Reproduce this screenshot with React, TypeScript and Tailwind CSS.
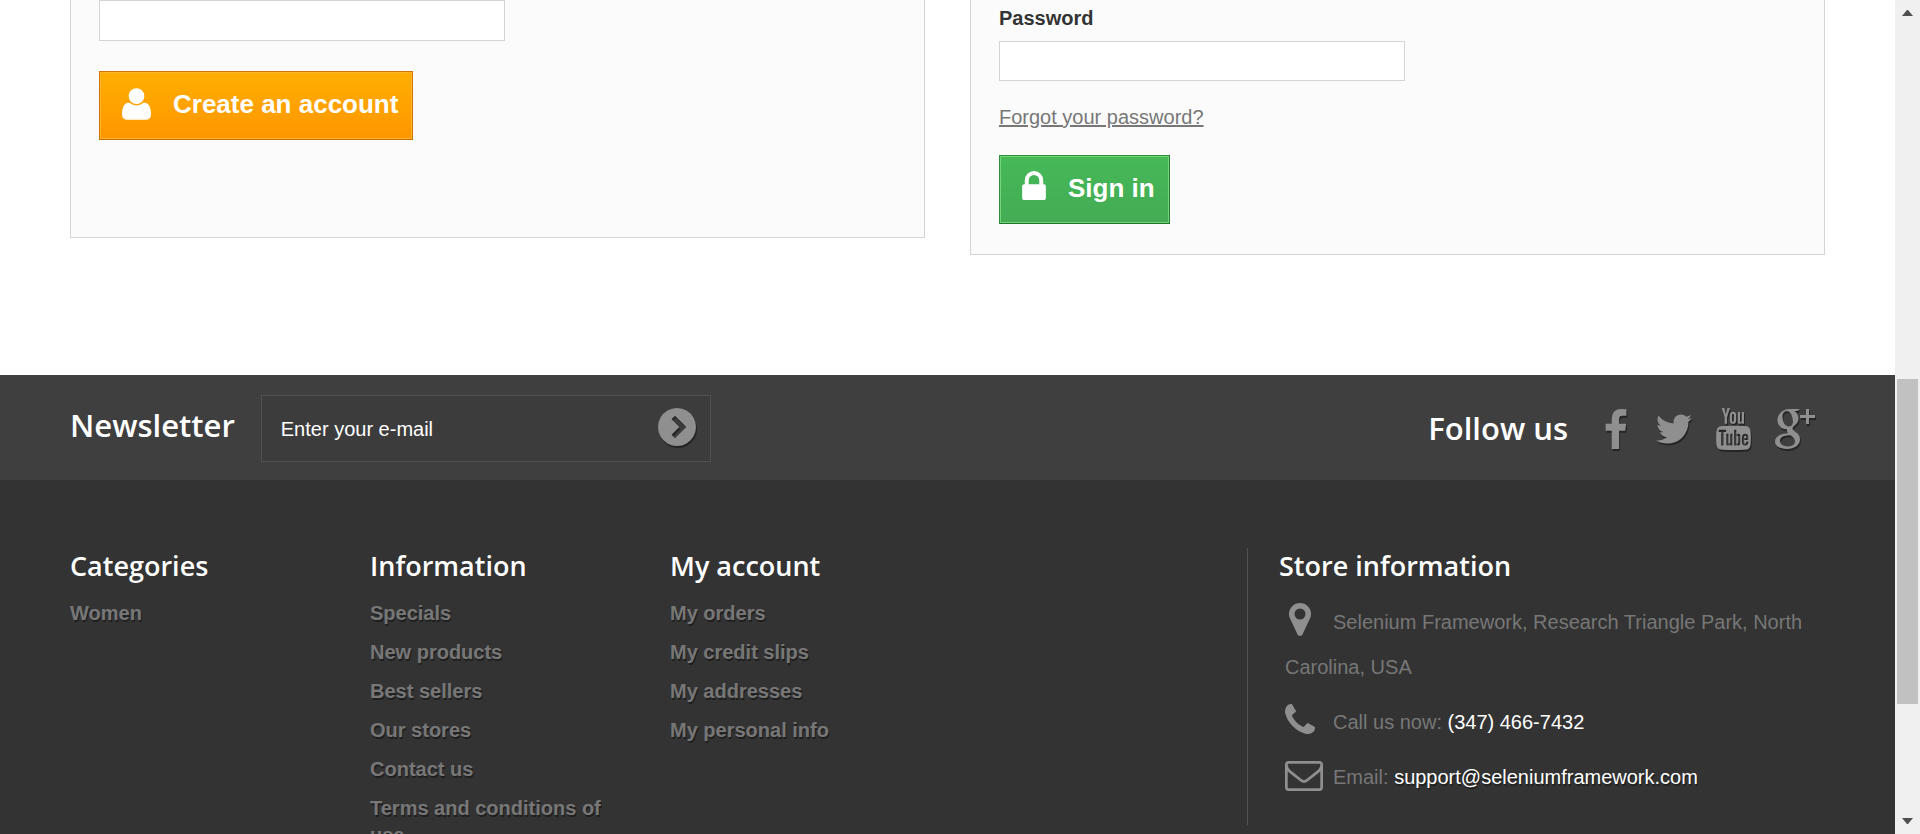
import type { ReactNode } from "react";

const icons = {
  user: {
    box: "0 128 1408 1536",
    d: "M1408 1405q0 120-73 189.5t-194 69.5h-874q-121 0-194-69.5t-73-189.5q0-53 3.5-103.5t14-109 26.5-108.5 43-97.5 62-81 85.5-53.5 111.5-20q9 0 42 21.5t74.5 48 108 48 133.5 21.5 133.5-21.5 108-48 74.5-48 42-21.5q61 0 111.5 20t85.5 53.5 62 81 43 97.5 26.5 108.5 14 109 3.5 103.5zm-320-893q0 159-112.5 271.5t-271.5 112.5-271.5-112.5-112.5-271.5 112.5-271.5 271.5-112.5 271.5 112.5 112.5 271.5z",
  },
  lock: {
    box: "0 128 1152 1408",
    d: "M320 768h512v-192q0-106-75-181t-181-75-181 75-75 181v192zm832 96v576q0 40-28 68t-68 28h-960q-40 0-68-28t-28-68v-576q0-40 28-68t68-28h32v-192q0-184 132-316t316-132 316 132 132 316v192h32q40 0 68 28t28 68z",
  },
  chevron: {
    box: "0 128 1536 1536",
    d: "M708 1332l414-414q22-22 0-44l-414-414q-22-22-44 0l-98 98q-22 22 0 44l294 294-294 294q-22 22 0 44l98 98q22 22 44 0zM1536 896q0 209-103 385.5t-279.5 279.5-385.5 103-385.5-103-279.5-279.5-103-385.5 103-385.5 279.5-279.5 385.5-103 385.5 103 279.5 279.5 103 385.5z",
  },
  facebook: {
    box: "95 0 864 1664",
    d: "M959 12v264h-157q-86 0-116 36t-30 108v189h293l-39 296h-254v759h-306v-759h-255v-296h255v-218q0-186 104-288.5t277-102.5q147 0 228 12z",
  },
  twitter: {
    box: "44 256 1576 1280",
    d: "M1620 408q-67 98-162 167 1 14 1 42 0 130-38 259.5t-115.5 248.5-184.5 210.5-258 146-323 54.5q-271 0-496-145 35 4 78 4 225 0 401-138-105-2-188-64.5t-114-159.5q33 5 61 5 43 0 85-11-112-23-185.5-111.5t-73.5-205.5v-4q68 38 146 41-66-44-105-115t-39-154q0-88 44-163 121 149 294.5 238.5t371.5 99.5q-8-38-8-74 0-134 94.5-228.5t228.5-94.5q140 0 236 102 109-21 205-78-37 115-142 178 93-10 186-50z",
  },
  youtube: {
    box: "27 0 1482 1792",
    d: "M971 1244v211q0 67-39 67-23 0-45-22v-301q22-22 45-22 39 0 39 67zm338 1v46h-90v-46q0-68 45-68t45 68zm-966-218h107v-94h-312v94h105v569h100v-569zm288 569h89v-494h-89v378q-30 42-57 42-18 0-21-21-1-3-1-35v-364h-89v391q0 49 8 73 12 37 58 37 48 0 102-61v54zm429-148v-197q0-73-9-99-17-56-71-56-50 0-93 54v-217h-89v663h89v-48q45 55 93 55 54 0 71-55 9-27 9-100zm338-10v-13h-91q0 51-2 61-7 36-40 36-46 0-46-69v-87h179v-103q0-79-27-116-39-51-106-51-68 0-107 51-28 37-28 116v173q0 79 29 116 39 51 108 51 72 0 108-53 18-27 21-54 2-9 2-58zm-608-913v-210q0-69-43-69t-43 69v210q0 70 43 70t43-70zm719 751q0 234-26 350-14 59-58 99t-102 46q-184 21-555 21t-555-21q-58-6-102.5-46t-57.5-99q-26-112-26-350 0-234 26-350 14-59 58-99t103-47q183-20 554-20t555 20q58 7 102.5 47t57.5 99q26 112 26 350zm-998-1276h102l-121 399v271h-100v-271q-14-74-61-212-37-103-65-187h106l71 263zm370 333v175q0 81-28 118-38 51-106 51-67 0-105-51-28-38-28-118v-175q0-80 28-117 38-51 105-51 68 0 106 51 28 37 28 117zm335-162v499h-91v-55q-53 62-103 62-46 0-59-37-8-24-8-75v-394h91v367q0 33 1 35 3 22 21 22 27 0 57-43v-381h91z",
  },
  google: {
    box: "0 0 40 40",
    d: "M14 0H25L22 2H19.500C22 4 23.500 6.500 23.500 9.500C23.500 13 21.500 15 19.500 16.600C18 18 17.500 18.600 17.500 19.500C17.500 20.500 18.500 21.300 20 22.500C23.300 24.800 25 27 25 30.500C25 35.500 20 40 11.500 40C4.500 40 0 37 0 32.500C0 28 4.500 24.600 13.200 24.300C12.300 23.300 11.800 22.300 12 20.200C6.500 20.500 2.500 16.500 2.500 11C2.500 5 8 0 14 0ZM11.800 2C9 2 7.200 4.500 7.500 8.500C7.900 13.500 10.500 17.500 13.800 17.500C16.700 17.500 18.200 15.300 17.900 11.500C17.400 6.300 15 2 11.800 2ZM14.500 26.300C8.500 26.300 5 28.500 5 31.800C5 35.200 8.300 37.500 13 37.500C17.600 37.500 20 35.300 20 32.300C20 29.700 18.300 28.200 15.800 26.400C15.400 26.300 15 26.300 14.500 26.300ZM31 0H34V6H40V9H34V15H31V9H25V6H31Z",
  },
  marker: {
    box: "0 128 1024 1536",
    d: "M768 640q0-106-75-181t-181-75-181 75-75 181 75 181 181 75 181-75 75-181zm256 0q0 109-33 179l-364 774q-16 33-47.5 52t-67.5 19-67.5-19-46.500-52l-365-774q-33-70-33-179 0-212 150-362t362-150 362 150 150 362z",
  },
  phone: {
    box: "0 128 1408 1408",
    d: "M1408 1240q0 27-10 70.5t-21 68.5q-21 50-122 106-94 51-186 51-27 0-52.5-3.5t-57.5-12.5-47.5-14.5-55.5-20.5-49-18q-98-35-175-83-128-79-264.5-215.5t-215.5-264.5q-48-77-83-175-3-9-18-49t-20.5-55.5-14.5-47.5-12.5-57.5-3.5-52.5q0-92 51-186 56-101 106-122 25-11 68.5-21t70.5-10q14 0 21 3 18 6 53 76 11 19 30 54t35 63.5 31 53.5q3 4 17.5 25t21.5 35.5 7 28.5q0 20-28.5 50t-62 55-62 53-28.5 46q0 9 5 22.5t8.5 20.5 14 24 11.5 19q76 137 174 235t235 174q2 1 19 11.5t24 14 20.5 8.5 22.5 5q18 0 46-28.5t53-62 55-62 50-28.5q14 0 28.5 7t35.5 21.5 25 17.5q25 15 53.5 31t63.5 35 54 30q70 35 76 53 3 7 3 21z",
  },
  envelope: {
    box: "0 256 1792 1408",
    d: "M1664 1504v-768q-32 36-69 66-268 206-426 338-51 43-83 67t-86.5 48.5-102.5 24.5h-2q-48 0-102.5-24.5t-86.5-48.5-83-67q-158-132-426-338-37-30-69-66v768q0 13 9.5 22.5t22.5 9.5h1472q13 0 22.5-9.5t9.5-22.5zm0-1051v-24.5l-.5-13-3-12.5-5.5-9-9-7.5-14-2.5h-1472q-13 0-22.5 9.5t-9.5 22.5q0 168 147 284 193 152 401 317 6 5 35 29.5t46 37.5 44.5 31.5 50.5 27.5 43 9h2q20 0 43-9t50.5-27.5 44.5-31.5 46-37.5 35-29.5q208-165 401-317 54-43 100.5-115.5t46.5-131.5zm128-37v1088q0 66-47 113t-113 47h-1472q-66 0-113-47t-47-113v-1088q0-66 47-113t113-47h1472q66 0 113 47t47 113z",
  },
};

function Icon({ name, className }: { name: keyof typeof icons; className: string }) {
  return (
    <svg aria-hidden="true" viewBox={icons[name].box} fill="currentColor" fillRule={name === "google" || name === "chevron" ? "evenodd" : "nonzero"} className={className}>
      <path d={icons[name].d} />
    </svg>
  );
}

const shadow = "[text-shadow:1px_2px_0_rgba(0,0,0,0.4)]";
const iconShadow = "drop-shadow-[1px_2px_0_rgba(0,0,0,0.4)]";

const columns = [
  { title: "Categories", links: ["Women"] },
  {
    title: "Information",
    links: ["Specials", "New products", "Best sellers", "Our stores", "Contact us", "Terms and conditions of use"],
  },
  { title: "My account", links: ["My orders", "My credit slips", "My addresses", "My personal info"] },
];

const socials = [
  { label: "Facebook", icon: "facebook", size: "h-10 w-8" },
  { label: "Twitter", icon: "twitter", size: "h-[30px] w-9" },
  { label: "YouTube", icon: "youtube", size: "h-[42px] w-[35px]" },
  { label: "Google Plus", icon: "google", size: "size-10" },
] as const;

function Heading({ children }: { children: ReactNode }) {
  return <h4 className="pt-0.5 font-['Open_Sans',sans-serif] text-[27px] leading-8 font-semibold text-white">{children}</h4>;
}

function ScrollBar() {
  return (
    <div aria-hidden="true" className="flex w-[25px] shrink-0 flex-col items-center bg-[#f0f0f0] py-2.5">
      <svg viewBox="0 0 11 6" className="h-1.5 w-[11px] fill-[#505050]"><path d="M5 0h1l5 6H0z" /></svg>
      <div className="flex w-full grow flex-col px-0.5 py-1">
        <div className="grow-[359]" />
        <div className="grow-[325] bg-[#c1c1c1]" />
        <div className="grow-[110]" />
      </div>
      <svg viewBox="0 0 11 6" className="h-1.5 w-[11px] fill-[#505050]"><path d="M0 0h11L6 6H5z" /></svg>
    </div>
  );
}

export default function App() {
  return (
    <div className="flex h-screen overflow-hidden bg-white font-['Liberation_Sans',Arial,sans-serif] text-xl text-[#777777]">
      <div className="min-w-0 grow">
        <main className="grid grid-cols-2 items-start gap-[45px] px-[70px] pb-[120px]">
          <form className="border border-t-0 border-[#d6d4d4] bg-[#fbfbfb] px-7 pb-[97px]">
            <input type="email" aria-label="Email address" className="block h-[41px] w-[406px] border border-[#d6d4d4] bg-white px-2 outline-none" />
            <button type="button" className="mt-[30px] flex h-[69px] items-center border border-t-[#cf7500] border-r-[#cf7500] border-b-[#c86d00] border-l-[#cf7500] bg-linear-to-b from-[#ffae00] to-[#ff9600] pr-3.5 pl-[22px] text-[26px] leading-8 font-bold text-white shadow-[inset_0_0_0_1px_#ffb42e]">
              <Icon name="user" className="mr-[22px] mb-1 h-8 w-[29px]" />
              <span className="pb-1">Create an account</span>
            </button>
          </form>
          <form className="border border-t-0 border-[#d6d4d4] bg-[#fbfbfb] px-7 pt-1 pb-[30px]">
            <label htmlFor="password" className="block leading-7 font-bold text-[#333333]">Password</label>
            <input id="password" type="password" className="mt-[9px] block h-10 w-[406px] border border-[#d6d4d4] bg-white px-2 outline-none" />
            <p className="mt-[22px] leading-7">
              <a href="#forgot" className="underline">Forgot your password?</a>
            </p>
            <button type="button" className="mt-6 flex h-[69px] items-center border border-t-[#2e8f3f] border-r-[#247a34] border-b-[#1f6f2d] border-l-[#2e8f3f] bg-linear-to-b from-[#46b958] to-[#43ab54] pr-3.5 pl-[22px] text-[26px] leading-8 font-bold text-white shadow-[inset_0_0_0_1px_#74d578]">
              <Icon name="lock" className="mr-[22px] mb-2 h-[29px] w-6" />
              <span className="pb-1">Sign in</span>
            </button>
          </form>
        </main>

        <footer className="bg-[#333333]">
          <div className="flex h-[105px] items-center justify-between bg-[#3f3f3f] px-[70px] pt-0.5 font-['Open_Sans',sans-serif] text-[31px] leading-10 font-semibold text-white">
            <form className="flex items-center">
              <h4 className="mr-[26px] pb-2">Newsletter</h4>
              <div className="flex h-[67px] w-[450px] items-center border border-[#515151] bg-[#3c3c3c] pr-3.5 pl-[19px]">
                <input type="text" aria-label="Enter your e-mail" defaultValue="Enter your e-mail" className="min-w-0 grow bg-transparent font-['Liberation_Sans',Arial,sans-serif] text-xl font-normal outline-none" />
                <button type="button" aria-label="Subscribe" className="pb-1 text-[#908f8f]">
                  <Icon name="chevron" className={`size-[38px] ${iconShadow}`} />
                </button>
              </div>
            </form>
            <div className="flex items-center pr-2.5">
              <h4 className="mr-8 pb-0.5">Follow us</h4>
              <ul className="flex items-center gap-6 text-[#908f8f]">
                {socials.map((s) => (
                  <li key={s.label}>
                    <a href="#social" aria-label={s.label} className="block">
                      <Icon name={s.icon} className={`${s.size} ${iconShadow}`} />
                    </a>
                  </li>
                ))}
              </ul>
            </div>
          </div>

          <div className="grid grid-cols-12 items-start pt-[68px] pr-12 pl-[47px]">
            {columns.map((c) => (
              <section key={c.title} className="col-span-2 px-[23px]">
                <Heading>{c.title}</Heading>
                <ul className="mt-[18px] space-y-3">
                  {c.links.map((l) => (
                    <li key={l} className="leading-[27px] font-bold">
                      <a href="#link" className={shadow}>{l}</a>
                    </li>
                  ))}
                </ul>
              </section>
            ))}
            <section className="col-span-4 col-start-9 h-[277px] border-l border-[#515151] pr-[23px] pl-[31px]">
              <Heading>Store information</Heading>
              <ul className="pl-1.5">
                <li className="mt-[18px] leading-[45px]">
                  <span className="mr-2.5 mb-2 inline-flex w-[38px] justify-start pl-1 align-middle text-[#908f8f]">
                    <Icon name="marker" className="h-[33px] w-[22px]" />
                  </span>
                  Selenium Framework, Research Triangle Park, North Carolina, USA
                </li>
                <li className="mt-2.5 flex items-center leading-[45px]">
                  <Icon name="phone" className="mr-[18px] mb-2 size-[30px] text-[#908f8f]" />
                  <span>Call us now: <span className="text-white">(347) 466-7432</span></span>
                </li>
                <li className="mt-2.5 flex items-center leading-[45px]">
                  <Icon name="envelope" className="mr-2.5 mb-1 h-[30px] w-[38px] text-[#908f8f]" />
                  <span>Email: <a href="mailto:support@seleniumframework.com" className={`text-white ${shadow}`}>support@seleniumframework.com</a></span>
                </li>
              </ul>
            </section>
          </div>
        </footer>
      </div>
      <ScrollBar />
    </div>
  );
}
